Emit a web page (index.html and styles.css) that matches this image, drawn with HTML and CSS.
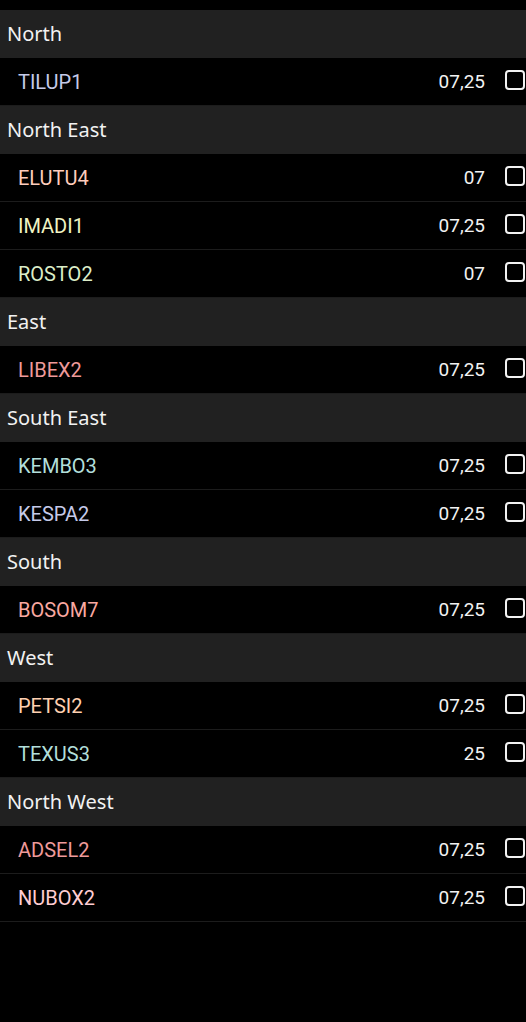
FILE: index.html
```html
<!DOCTYPE html>
<html lang="en">
<head>
    <meta charset="UTF-8">
    <meta name="viewport" content="width=device-width, initial-scale=1.0">
    <title>Stations</title>
    <link rel="stylesheet" href="styles.css">
</head>
<body>

    <div id="stationList">
        <div class="group">North</div>
        <div class="item"><span class="name indigo">TILUP1</span><span class="value">07,25</span><span class="check"></span></div>

        <div class="group">North East</div>
        <div class="item"><span class="name peach">ELUTU4</span><span class="value">07</span><span class="check"></span></div>
        <div class="item"><span class="name lime">IMADI1</span><span class="value">07,25</span><span class="check"></span></div>
        <div class="item"><span class="name lightgreen">ROSTO2</span><span class="value">07</span><span class="check"></span></div>

        <div class="group">East</div>
        <div class="item"><span class="name red">LIBEX2</span><span class="value">07,25</span><span class="check"></span></div>

        <div class="group">South East</div>
        <div class="item"><span class="name teal">KEMBO3</span><span class="value">07,25</span><span class="check"></span></div>
        <div class="item"><span class="name indigo">KESPA2</span><span class="value">07,25</span><span class="check"></span></div>

        <div class="group">South</div>
        <div class="item"><span class="name salmon">BOSOM7</span><span class="value">07,25</span><span class="check"></span></div>

        <div class="group">West</div>
        <div class="item"><span class="name orange">PETSI2</span><span class="value">07,25</span><span class="check"></span></div>
        <div class="item"><span class="name teal">TEXUS3</span><span class="value">25</span><span class="check"></span></div>

        <div class="group">North West</div>
        <div class="item"><span class="name red">ADSEL2</span><span class="value">07,25</span><span class="check"></span></div>
        <div class="item"><span class="name pink">NUBOX2</span><span class="value">07,25</span><span class="check"></span></div>
    </div>

</body>
</html>
```

FILE: styles.css
```css
body {
    margin: 0;
    background-color: #000;
    font-family: Roboto, "Noto Sans", sans-serif;
}

#stationList {
    padding-top: 10px;
}

/* Region headers */
.group {
    height: 46px;
    display: flex;
    align-items: center;
    padding-left: 7px;
    padding-bottom: 2px;
    background-color: #212121;
    color: #f2f2f2;
    font-family: "Noto Sans", sans-serif;
    font-size: 20px;
}

/* Station rows */
.item {
    height: 47px;
    display: flex;
    align-items: center;
    padding-left: 18px;
    padding-right: 1px;
    border-bottom: 1px solid #1c1c1c;
    font-size: 20px;
}

.item .name {
    flex: 1;
}

.item .value {
    color: #f2f2f2;
    font-size: 19px;
    margin-right: 20px;
}

.check {
    width: 16px;
    height: 16px;
    margin-bottom: 4px;
    border: 2px solid #f2f2f2;
    border-radius: 4px;
}

.indigo { color: #c5cae9; }
.peach { color: #ffccbc; }
.lime { color: #f0f4c3; }
.lightgreen { color: #dcedc8; }
.red { color: #ef9a9a; }
.teal { color: #b2dfdb; }
.salmon { color: #f9a8a0; }
.orange { color: #ffd0b0; }
.pink { color: #ffcdd2; }
```
